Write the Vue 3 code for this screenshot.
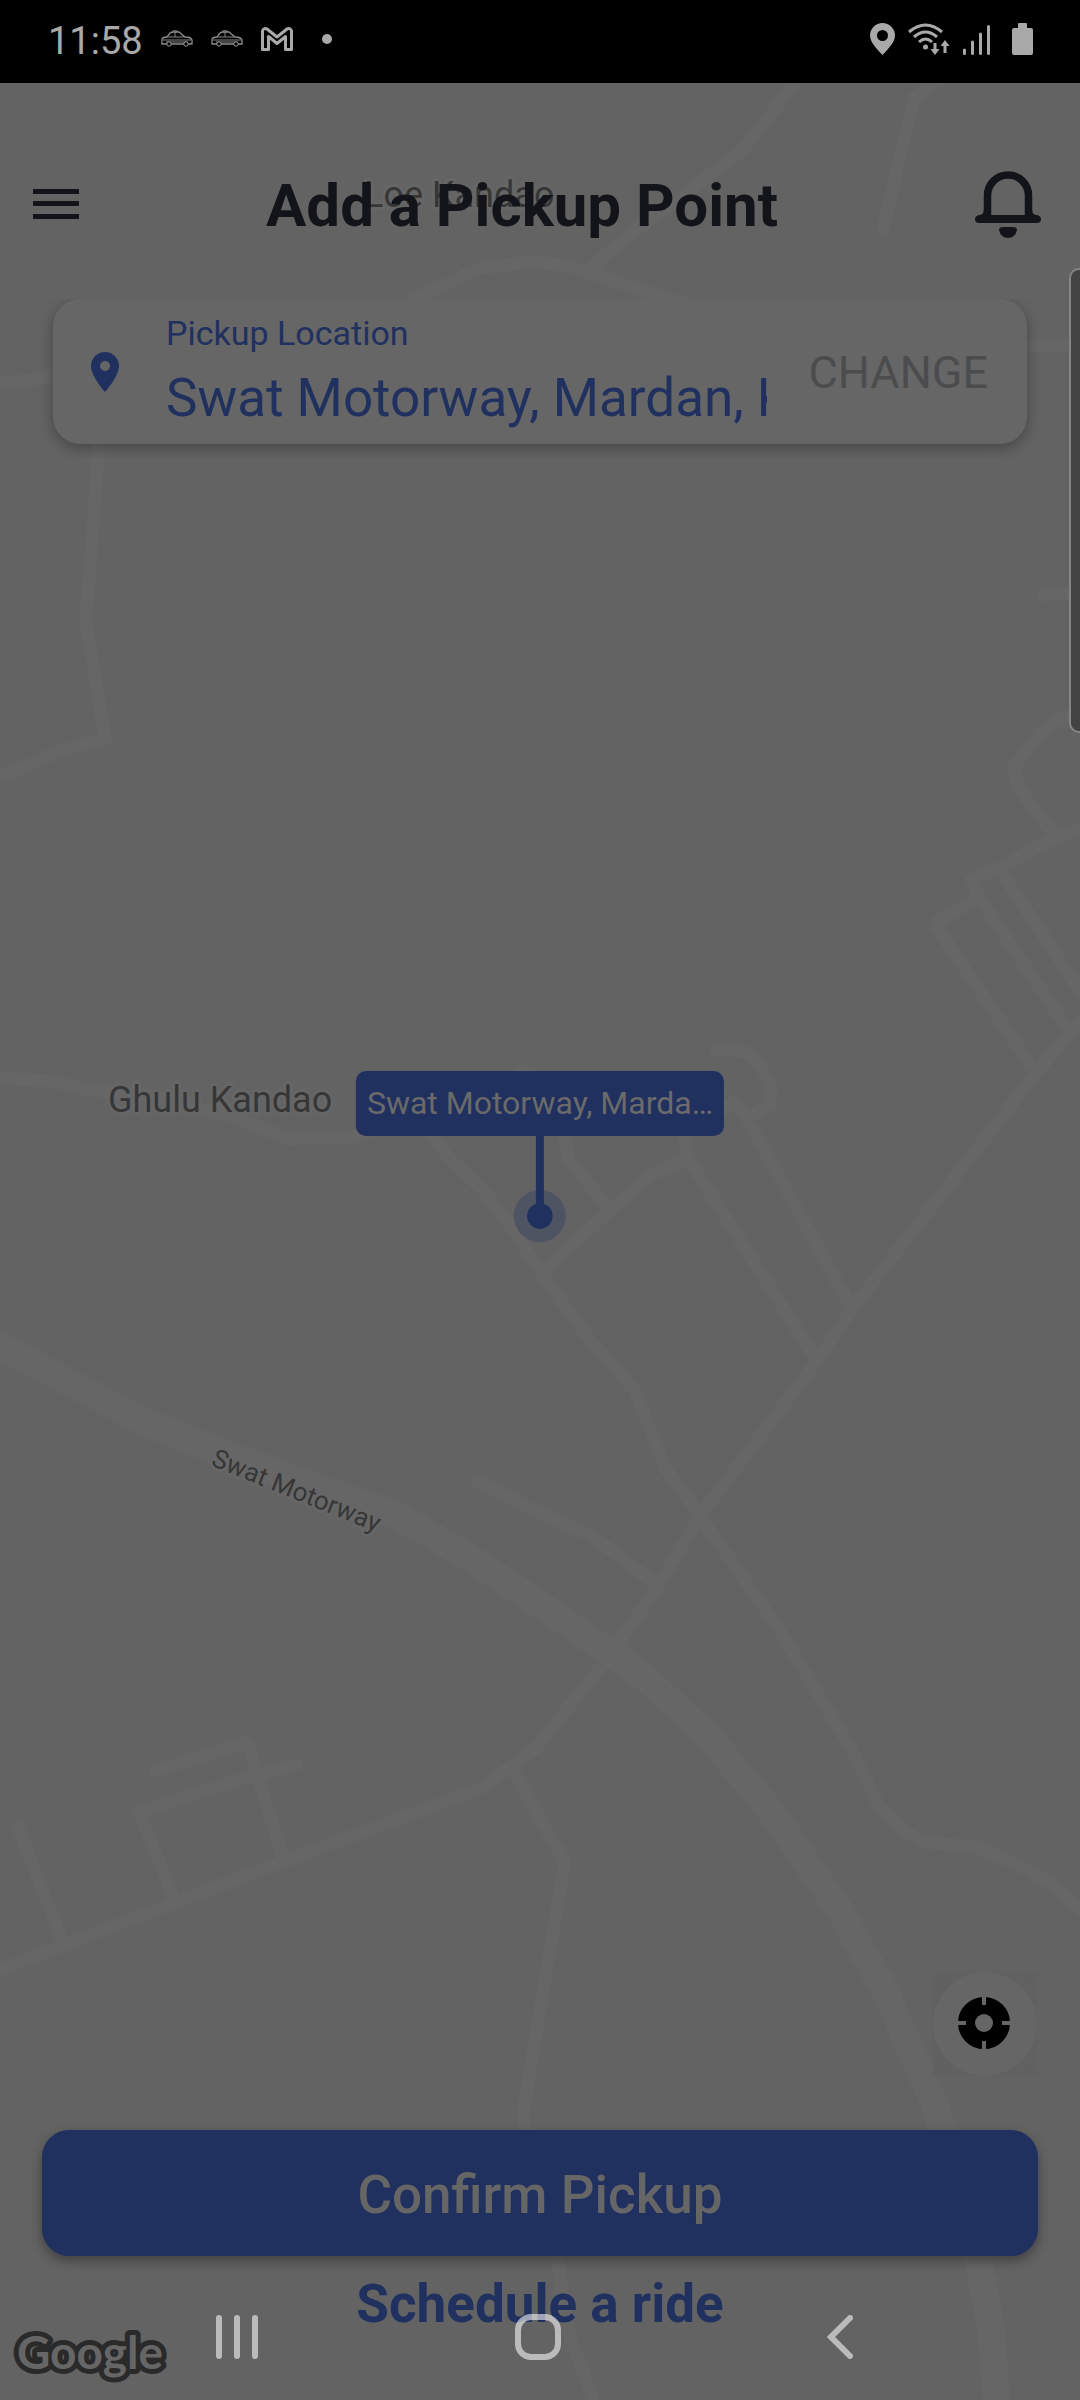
<script setup>
import { ref } from 'vue'

const pickup = ref('Swat Motorway, Mardan, Khyber')

// Minor roads, in map coordinates
const roads = [
  'M400 309 L415 299 L480 268 L530 262 L564 265 L657 295 L700 308',
  'M590 269 L619 243 L743 150 L795 83 L810 60',
  'M883 229 L914 98 L955 70',
  'M0 383 L34 380 L60 374',
  'M99 430 L99 443 L86 620 L105 739 L59 751 L10 773 L-10 779',
  'M1020 346 L1090 344',
  'M1043 595 L1090 592',
  'M1090 709 L1057 720 L1039 734 L1014 767 L1018 787 L1056 838',
  'M1090 826 L1053 838 L1005 865 L972 880 L978 896 L1067 1028',
  'M1001 872 L1040 930 L1090 1006',
  'M976 899 L938 921 L937 928 L1036 1073',
  'M1090 1010 L1036 1073 L852 1309 L817 1361 L700 1516 L660 1583 L617 1646 L535 1749 L484 1787 L282 1862 L-10 1973',
  'M425 1125 L448 1157 L482 1189 L513 1229 L543 1276 L592 1343 L609 1360 L635 1391 L666 1469 L700 1516 L778 1628 L850 1746 L879 1806 L905 1831 L922 1842 L977 1847 L1022 1867 L1053 1885 L1090 1918',
  'M-10 1078 L52 1081 L84 1089 L150 1096 L238 1118 L291 1140 L307 1137 L355 1137 L380 1128',
  'M522 1071 L560 1112 L569 1160 L609 1209',
  'M543 1272 L609 1211 L650 1176 L688 1158 L683 1130',
  'M688 1158 L817 1361',
  'M720 1110 L735 1102 L747 1118 L852 1309',
  'M716 1049 L747 1052 L760 1066 L771 1086 L770 1105 L747 1118',
  'M477 1481 L540 1513 L592 1536 L657 1585',
  'M515 1772 L540 1819 L565 1862 L540 2008 L523 2115 L530 2160 L557 2257 L569 2333 L597 2410',
  'M18 1827 L62 1940',
  'M155 1771 L245 1743 L249 1747 L257 1774 L284 1860',
  'M297 1765 L257 1774 L139 1812 L175 1901'
]
const motorway =
  'M-10 1342 L34 1364 L103 1400 L148 1423 L207 1447 L296 1480 L396 1515 L465 1555 L517 1589 L616 1657 L643 1676 L705 1733 L771 1811 L840 1911 L884 1989 L915 2060 L933 2100 L943 2130 L964 2195 L978 2260 L991 2327 L997 2410'
</script>

<template>
  <div class="page">
    <header class="status">
      <time>11:58</time>
      <svg v-for="n in 2" :key="n" class="car" width="32" height="17" viewBox="0 0 32 17" aria-hidden="true">
        <path d="M1 13V9Q2 7 6 7L9 3Q10 2 13 2H18L24 7Q30 7 31 10V14H1Z" fill="none" stroke="#8c8c8c" stroke-width="1.3" />
        <path d="M12 2V.8H16V2M14 2V7M6 7H24M2 10H30M5 12H27" fill="none" stroke="#888" />
        <circle cx="8" cy="14" r="2.2" fill="#000" stroke="#9a9a9a" />
        <circle cx="25" cy="14" r="2.2" fill="#000" stroke="#9a9a9a" />
      </svg>
      <svg class="mail" width="32" height="24" viewBox="0 0 32 24" aria-hidden="true">
        <path d="M1.5 22.5V4Q2.500 .5 6 2L16 10L26 2Q29.500 .5 30.500 4V22.500H24.500V9.500L16 16.500L7.500 9.500V22.500Z" fill="none" stroke="#a9a9a9" stroke-width="3" stroke-linejoin="round" />
      </svg>
      <span class="dot"></span>
      <div class="signals">
        <svg width="25" height="32" viewBox="0 0 25 32" aria-hidden="true">
          <path fill="#a9a9a9" fill-rule="evenodd" d="M12.500 0A12.500 12.500 0 0 0 0 12.500C0 19 6 25 12.500 32C19 25 25 19 25 12.500A12.500 12.500 0 0 0 12.500 0ZM12.500 7A5.500 5.500 0 1 1 12.500 18A5.500 5.500 0 1 1 12.500 7Z" />
        </svg>
        <svg width="42" height="32" viewBox="0 0 42 32" aria-hidden="true">
          <g fill="none" stroke="#a9a9a9" stroke-width="3">
            <path d="M1 9Q17.500 -5 34 9M6 14Q17.500 4 29 14M11 19Q17.500 13 24 19" />
            <path d="M27 20V30M37 30V20" />
          </g>
          <circle cx="17.500" cy="24" r="2.500" fill="#a9a9a9" />
          <path fill="#a9a9a9" d="M22.500 26L31.500 26L27 32ZM32.500 23H41.500L37 17Z" />
        </svg>
        <svg width="27" height="32" viewBox="0 0 27 32" aria-hidden="true">
          <path d="M1.500 27V30.500M9.500 19V30.500M17.500 11V30.500M25.500 3.500V30.500" stroke="#a9a9a9" stroke-width="3" stroke-linecap="round" />
        </svg>
        <svg class="battery" width="21" height="32" viewBox="0 0 21 32" aria-hidden="true">
          <path fill="#a9a9a9" d="M6 1Q6 0 7 0H14Q15 0 15 1V5H19Q21 5 21 7V30Q21 32 19 32H2Q0 32 0 30V7Q0 5 2 5H6Z" />
        </svg>
      </div>
    </header>

    <main class="screen">
      <svg class="map" viewBox="0 83 1080 2317" preserveAspectRatio="xMidYMid slice" role="img" aria-label="Map">
        <g fill="none" stroke="#666" stroke-width="13" stroke-linecap="round">
          <path v-for="(d, i) in roads" :key="i" :d="d" />
          <path :d="motorway" stroke-width="28" />
        </g>
        <g class="place">
          <text x="364" y="207">Loe Kandao</text>
          <text x="108" y="1112">Ghulu Kandao</text>
          <text class="road-name" transform="translate(210 1465) rotate(22)">Swat Motorway</text>
        </g>
        <text class="logo" x="17" y="2369">Google</text>
      </svg>

      <div class="marker">
        <span class="marker-label">Swat Motorway, Marda…</span>
        <span class="stem"></span>
        <span class="halo"></span>
      </div>

      <div class="topbar">
        <button class="icon-btn" aria-label="Menu">
          <svg width="46" height="30" viewBox="0 0 46 30"><path fill="#13141a" d="M0 0H46V5H0ZM0 12H46V17H0ZM0 25H46V30H0Z" /></svg>
        </button>
        <h1>Add a Pickup Point</h1>
        <button class="icon-btn" aria-label="Notifications">
          <svg width="66" height="67" viewBox="0 0 66 67">
            <path d="M12.500 48V24.500A20.500 20.500 0 0 1 53.500 24.500V48" fill="none" stroke="#13141a" stroke-width="7.500" />
            <path fill="#13141a" d="M9 38Q9 44 4 44Q0 45 0 48Q0 52 4 52H62Q66 52 66 48Q66 45 62 44Q57 44 57 38ZM16 38V44H50V38Z" fill-rule="evenodd" />
            <path fill="#13141a" d="M28 56H38Q42 56 42 59Q40 67 33 67Q26 67 24 59Q24 56 28 56Z" />
          </svg>
        </button>
      </div>

      <section class="card">
        <svg class="pin" width="48" height="48" viewBox="0 0 24 24" aria-hidden="true">
          <path fill="#20305f" d="M12 2C8.130 2 5 5.130 5 9c0 5.250 7 13 7 13s7-7.750 7-13c0-3.870-3.130-7-7-7zm0 9.500a2.500 2.500 0 0 1 0-5 2.500 2.500 0 0 1 0 5z" />
        </svg>
        <div class="field">
          <label for="pickup">Pickup Location</label>
          <input id="pickup" v-model="pickup" type="text" readonly />
        </div>
        <button class="change">CHANGE</button>
      </section>

      <div class="actions">
        <button class="locate" aria-label="My location">
          <svg width="104" height="104" viewBox="0 0 104 104">
            <circle cx="52" cy="52" r="52" fill="#666" />
            <circle cx="51" cy="51" r="17.500" fill="none" stroke="#000" stroke-width="17" />
            <path d="M51 24V33M51 69V78M24 51H33M69 51H78" stroke="#666" stroke-width="4" />
          </svg>
        </button>
        <button class="confirm">Confirm Pickup</button>
        <button class="schedule">Schedule a ride</button>
      </div>

      <nav class="sysnav">
        <button class="icon-btn" aria-label="Recent apps">
          <svg width="42" height="44" viewBox="0 0 42 44"><path d="M3 3V41M21 3V41M39 3V41" /></svg>
        </button>
        <button class="icon-btn" aria-label="Home">
          <svg width="46" height="46" viewBox="0 0 46 46"><rect x="3" y="3" width="40" height="40" rx="13" /></svg>
        </button>
        <button class="icon-btn" aria-label="Back">
          <svg width="26" height="44" viewBox="0 0 26 44"><path d="M23 3L4 22L23 41" /></svg>
        </button>
      </nav>

      <div class="edge-panel"></div>
    </main>
  </div>
</template>

<style>
body {
  margin: 0;
  background: #636363;
}
</style>

<style scoped>
.page {
  display: flex;
  flex-direction: column;
  min-height: 100vh;
  font-family: Roboto, "Noto Sans", sans-serif;
}
svg {
  display: block;
  flex: none;
}
button {
  border: 0;
  padding: 0;
  background: none;
  font-family: inherit;
  cursor: pointer;
}
.status {
  box-sizing: border-box;
  height: 83px;
  padding: 0 47px 6px 48px;
  display: flex;
  align-items: center;
  background: #000;
  color: #a9a9a9;
}
.status time {
  font-size: 38px;
  line-height: 48px;
  margin-top: 4px;
}
.car,
.mail {
  margin-left: 18px;
}
.dot {
  width: 10px;
  height: 10px;
  margin-left: 29px;
  border-radius: 50%;
  background: #a9a9a9;
}
.signals {
  display: flex;
  gap: 13px;
  margin-left: auto;
}
.battery {
  margin-left: 9px;
}
.screen {
  position: relative;
  flex: 1;
  display: flex;
  flex-direction: column;
  overflow: hidden;
  background: #636363;
}
.map {
  position: absolute;
  inset: 0;
  width: 100%;
  height: 100%;
}
.place text {
  font-size: 36px;
  fill: #363636;
  stroke: #666;
  stroke-width: 6px;
  stroke-linejoin: round;
  paint-order: stroke;
}
.place .road-name {
  font-size: 26px;
}
.logo {
  font-family: Lato, sans-serif;
  font-size: 46px;
  font-weight: 700;
  fill: #666;
  stroke: #2a2a2a;
  stroke-width: 10px;
  stroke-linejoin: round;
  paint-order: stroke;
}
.marker {
  position: absolute;
  left: 50%;
  bottom: 50%;
  transform: translateX(-50%);
  display: flex;
  flex-direction: column;
  align-items: center;
}
.marker-label {
  padding: 0 11px;
  border-radius: 10px;
  background: #20305f;
  color: #6a6a6a;
  font-size: 32px;
  line-height: 65px;
  white-space: nowrap;
}
.stem {
  width: 8px;
  height: 69px;
  margin-bottom: -15px;
  background: #20305f;
  z-index: 1;
}
.halo {
  width: 26px;
  height: 26px;
  border: 13px solid #4e5462;
  border-radius: 50%;
  background: #20305f;
  background-clip: padding-box;
}
.topbar {
  position: relative;
  box-sizing: border-box;
  height: 216px;
  padding: 26px 39px 0 33px;
  display: flex;
  align-items: center;
}
.topbar h1 {
  flex: 1;
  margin: 0;
  padding: 4px 10px 0 0;
  color: #13141a;
  font-size: 60px;
  line-height: 70px;
  font-weight: 700;
  text-align: center;
}
.card {
  position: relative;
  display: flex;
  align-items: center;
  height: 145px;
  margin: 0 53px;
  padding: 0 39px 0 28px;
  box-sizing: border-box;
  border-radius: 27px;
  background: #666;
  box-shadow: 0 4px 14px rgba(0, 0, 0, 0.3);
  clip-path: inset(0 -20px -14px -20px);
}
.field {
  flex: 1;
  min-width: 0;
  display: flex;
  flex-direction: column;
  gap: 8px;
  margin: 0 42px 0 37px;
  padding-top: 3px;
  color: #20305f;
}
.field label {
  font-size: 34px;
  line-height: 42px;
}
.field input {
  width: 100%;
  height: 72px;
  padding: 0;
  border: 0;
  outline: 0;
  background: none;
  color: inherit;
  font-family: inherit;
  font-size: 53px;
}
.change {
  padding-top: 3px;
  color: #4b4c4e;
  font-size: 45px;
  line-height: 54px;
}
.actions {
  position: relative;
  flex: 1;
  display: flex;
  flex-direction: column;
  justify-content: flex-end;
  padding: 0 42px 65px;
}
.locate {
  align-self: flex-end;
  margin: 0 1px 54px 0;
  background: #616161;
}
.confirm {
  height: 126px;
  padding-top: 3px;
  border-radius: 27px;
  background: #20305f;
  color: #666;
  font-size: 53px;
  font-weight: 500;
  box-shadow: 0 5px 12px rgba(0, 0, 0, 0.35);
}
.schedule {
  align-self: center;
  margin-top: 17px;
  color: #20305f;
  font-size: 53px;
  line-height: 62px;
  font-weight: 700;
}
.sysnav {
  position: absolute;
  left: 0;
  right: 3px;
  bottom: 0;
  height: 126px;
  display: grid;
  grid-template-columns: repeat(3, 28%);
  justify-content: center;
}
.sysnav button {
  display: flex;
  align-items: center;
  justify-content: center;
}
.sysnav svg {
  fill: none;
  stroke: rgba(255, 255, 255, 0.57);
  stroke-width: 6px;
  stroke-linecap: round;
}
.edge-panel {
  position: absolute;
  top: 185px;
  right: -2px;
  width: 11px;
  height: 461px;
  border: 2px solid #858585;
  border-right: 0;
  border-radius: 10px 0 0 10px;
  background: #434343;
}
</style>
